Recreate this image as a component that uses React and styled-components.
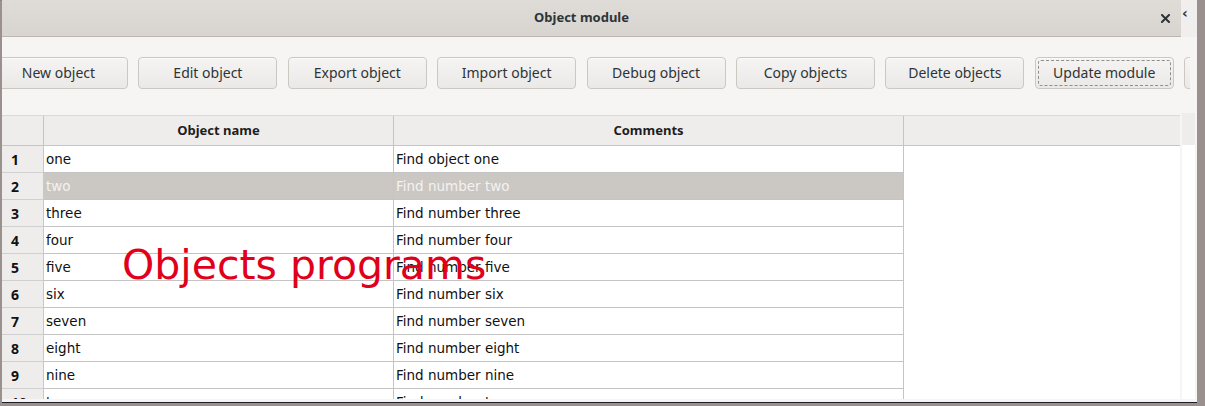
import React from "react";
import styled, { createGlobalStyle } from "styled-components";

const Global = createGlobalStyle`
  html, body { margin: 0; padding: 0; }
  body {
    width: 1205px;
    height: 406px;
    overflow: hidden;
    background: #9a918f;
    font-family: "Noto Sans", "DejaVu Sans", sans-serif;
  }
`;

const Desktop = styled.div`
  position: relative;
  width: 1205px;
  height: 406px;
  padding-left: 2px;
  box-sizing: border-box;
`;

const TopEdge = styled.div`
  position: absolute;
  left: 0;
  top: 0;
  width: 17px;
  height: 1px;
  background: #8c8483;
`;

const Window = styled.div`
  position: relative;
  width: 1195px;
  height: 403px;
  background: #f6f5f4;
  border-bottom: 1px solid #1d1d26;
  box-sizing: border-box;
  display: flex;
  flex-direction: column;
  overflow: hidden;
`;

const TitleRow = styled.div`
  display: flex;
  height: 37px;
  flex: none;
`;

const TitleBar = styled.div`
  position: relative;
  flex: 1;
  display: flex;
  align-items: center;
  justify-content: center;
  background: linear-gradient(#dfdcd8, #d8d4d0);
  border-bottom: 1px solid #bdb6af;
  box-sizing: border-box;
`;

const Title = styled.div`
  font-weight: 700;
  font-size: 13px;
  color: #2e3436;
  margin-right: 20px;
  margin-top: -3px;
`;

const CloseButton = styled.div`
  position: absolute;
  right: 11px;
  top: 14px;
  width: 9px;
  height: 9px;
  display: flex;
`;

const SideTab = styled.div`
  width: 16px;
  background: #f1efed;
  color: #2e3436;
  font-family: "DejaVu Sans", sans-serif;
  font-weight: 700;
  font-size: 14px;
  line-height: 1;
  padding-top: 6px;
  padding-left: 1px;
  box-sizing: border-box;
`;

const Toolbar = styled.div`
  height: 78px;
  flex: none;
  width: 1188px;
  overflow: hidden;
  padding-top: 20px;
  box-sizing: border-box;
`;

const ButtonRow = styled.div`
  display: flex;
  gap: 10.4px;
  margin-left: -13px;
`;

const Button = styled.button`
  position: relative;
  flex: none;
  width: 139px;
  height: 32px;
  border: 1px solid #cdc7c2;
  border-radius: 4px;
  background: linear-gradient(#f5f4f3, #ebe9e7);
  color: #2e3436;
  font-family: "Noto Sans", sans-serif;
  font-size: 14px;
  padding: 0;
  padding-bottom: 1px;
  box-sizing: border-box;
  box-shadow: inset 0 1px 0 #fbfaf9;

  ${(p) =>
    p.$focused &&
    `
    &::after {
      content: "";
      position: absolute;
      inset: 2px;
      border: 1px dashed #8e8e8e;
      border-radius: 3px;
    }
  `}
`;

const TableArea = styled.div`
  display: flex;
  height: 284px;
  flex: none;
`;

const TableView = styled.div`
  width: 1178px;
  height: 284px;
  background: #ffffff;
  overflow: hidden;
  position: relative;
`;

const HeaderRow = styled.div`
  display: flex;
  height: 31px;
  background: #efedeb;
  border-top: 1px solid #dcd8d4;
  border-bottom: 1px solid #c9c4be;
  box-sizing: border-box;
`;

const Row = styled.div`
  display: flex;
  height: 27px;
  box-sizing: border-box;
`;

const NumCell = styled.div`
  width: 42px;
  flex: none;
  background: #efedeb;
  border-right: 1px solid #c8c8c8;
  border-bottom: 1px solid #d0d0d0;
  box-sizing: border-box;
  display: flex;
  align-items: center;
  padding-left: 9px;
  font-family: "Noto Sans", sans-serif;
  font-weight: 700;
  font-size: 14px;
  color: #111;
`;

const HeadNum = styled.div`
  width: 42px;
  flex: none;
  border-right: 1px solid #c8c3bd;
  box-sizing: border-box;
`;

const HeadCell = styled.div`
  width: ${(p) => p.$w}px;
  flex: none;
  border-right: 1px solid #c8c3bd;
  box-sizing: border-box;
  display: flex;
  align-items: center;
  justify-content: center;
  font-family: "Noto Sans", sans-serif;
  font-weight: 700;
  font-size: 13px;
  color: #1d1d1d;
  padding-bottom: 1px;
`;

const Cell = styled.div`
  width: ${(p) => p.$w}px;
  flex: none;
  border-right: 1px solid #c4c4c4;
  border-bottom: 1px solid #c4c4c4;
  box-sizing: border-box;
  display: flex;
  align-items: center;
  padding-left: 2px;
  font-family: "DejaVu Sans", sans-serif;
  font-size: 13.5px;
  color: ${(p) => (p.$sel ? "#f4f2f0" : "#111")};
  background: ${(p) => (p.$sel ? "#cbc7c2" : "#ffffff")};
  white-space: nowrap;
  overflow: hidden;
`;

const VScroll = styled.div`
  width: 13px;
  margin-left: 2px;
  display: flex;
  flex-direction: column;
  background: #ffffff;
  flex: none;
`;

const VScrollHead = styled.div`
  height: 32px;
  margin-top: -2px;
  background: #efedeb;
`;

const Overlay = styled.div`
  position: absolute;
  left: 120px;
  top: 245px;
  font-family: "DejaVu Sans", sans-serif;
  font-size: 41px;
  line-height: 41px;
  color: #e0001b;
  white-space: nowrap;
  pointer-events: none;
`;

const buttons = [
  "New object",
  "Edit object",
  "Export object",
  "Import object",
  "Debug object",
  "Copy objects",
  "Delete objects",
  "Update module",
  "",
];

const rows = [
  ["one", "Find object one"],
  ["two", "Find number two"],
  ["three", "Find number three"],
  ["four", "Find number four"],
  ["five", "Find number five"],
  ["six", "Find number six"],
  ["seven", "Find number seven"],
  ["eight", "Find number eight"],
  ["nine", "Find number nine"],
  ["ten", "Find number ten"],
];

export default function App() {
  return (
    <Desktop>
      <Global />
      <TopEdge />
      <Window>
        <TitleRow>
          <TitleBar>
            <Title>Object module</Title>
            <CloseButton>
              <svg width="9" height="9" viewBox="0 0 9 9">
                <path d="M1 1 L8 8 M8 1 L1 8" stroke="#2e3436" strokeWidth="2" strokeLinecap="square" />
              </svg>
            </CloseButton>
          </TitleBar>
          <SideTab>‹</SideTab>
        </TitleRow>
        <Toolbar>
          <ButtonRow>
            {buttons.map((b, i) => (
              <Button key={i} $focused={b === "Update module"}>
                {b}
              </Button>
            ))}
          </ButtonRow>
        </Toolbar>
        <TableArea>
          <TableView>
            <HeaderRow>
              <HeadNum />
              <HeadCell $w={350}>Object name</HeadCell>
              <HeadCell $w={510}>Comments</HeadCell>
            </HeaderRow>
            {rows.map(([name, comment], i) => (
              <Row key={i}>
                <NumCell>{i + 1}</NumCell>
                <Cell $w={350} $sel={i === 1}>{name}</Cell>
                <Cell $w={510} $sel={i === 1}>{comment}</Cell>
              </Row>
            ))}
          </TableView>
          <VScroll>
            <VScrollHead />
          </VScroll>
        </TableArea>
        <Overlay>Objects programs</Overlay>
      </Window>
    </Desktop>
  );
}
